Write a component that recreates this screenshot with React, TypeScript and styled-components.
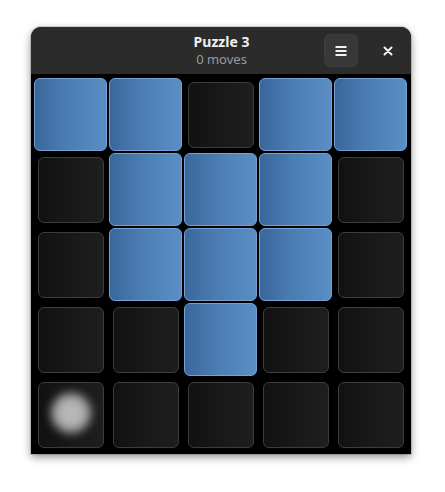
import React, { useState } from "react";
import styled, { createGlobalStyle } from "styled-components";

const GlobalStyle = createGlobalStyle`
  html, body {
    margin: 0;
    padding: 0;
    background: #ffffff;
    font-family: "Noto Sans", "Open Sans", sans-serif;
  }
`;

const Page = styled.div`
  width: 445px;
  height: 492px;
  padding: 27px 0 0 31px;
  box-sizing: border-box;
`;

const Window = styled.div`
  width: 380px;
  border-radius: 10px 10px 0 0;
  overflow: hidden;
  background: #000;
  box-shadow: 0 3px 9px rgba(0, 0, 0, 0.45), 0 0 0 1px rgba(0, 0, 0, 0.12);
`;

const HeaderBar = styled.div`
  height: 47px;
  background: #2b2b2b;
  display: grid;
  grid-template-columns: 1fr auto 1fr;
  align-items: center;
  padding: 0 11px 0 12px;
  box-sizing: border-box;
`;

const TitleBox = styled.div`
  grid-column: 2;
  display: flex;
  flex-direction: column;
  align-items: center;
  line-height: 1;
`;

const Title = styled.div`
  color: #f0f0f0;
  font-weight: 700;
  font-size: 14px;
  margin-bottom: 4px;
`;

const Subtitle = styled.div`
  color: #9a9a9a;
  font-size: 13px;
`;

const Controls = styled.div`
  grid-column: 3;
  justify-self: end;
  display: flex;
  align-items: center;
  gap: 18px;
`;

const MenuButton = styled.button`
  width: 34px;
  height: 33px;
  border: none;
  border-radius: 6px;
  background: #383838;
  box-shadow: inset 0 0 0 1px rgba(255, 255, 255, 0.03);
  display: flex;
  align-items: center;
  justify-content: center;
  padding: 0;
`;

const CloseButton = styled.button`
  width: 24px;
  height: 24px;
  border: none;
  background: transparent;
  display: flex;
  align-items: center;
  justify-content: center;
  padding: 0;
`;

const Board = styled.div`
  display: grid;
  grid-template-columns: repeat(5, 73px);
  grid-auto-rows: 73px;
  gap: 2px;
  padding: 4px 3px 3px 3px;
`;

const Cell = styled.div`
  position: relative;
  display: flex;
  align-items: center;
  justify-content: center;
  overflow: hidden;
`;

const Tile = styled.div<{ $on: boolean }>`
  box-sizing: border-box;
  border-radius: 6px;
  width: ${(p) => (p.$on ? "73px" : "66px")};
  height: ${(p) => (p.$on ? "73px" : "66px")};
  border: 1px solid ${(p) => (p.$on ? "#73a3d6" : "#3d3d3d")};
  background: ${(p) =>
    p.$on
      ? "linear-gradient(90deg, #3a679b 0%, #4b7db3 45%, #5a8ec4 100%)"
      : "linear-gradient(90deg, #111111 0%, #1a1a1a 60%, #1e1e1e 100%)"};
`;

const Touch = styled.div`
  position: absolute;
  left: 50%;
  top: 50%;
  width: 42px;
  height: 42px;
  margin: -23px 0 0 -21px;
  border-radius: 50%;
  background: radial-gradient(circle, #bdbdbd 0%, #b0b0b0 45%, rgba(150,150,150,0.6) 75%, rgba(120,120,120,0) 100%);
  filter: blur(4px);
`;

const layout = [
  "11011",
  "01110",
  "01110",
  "00100",
  "00000",
];

const App = () => {
  const [cells] = useState(layout.map((r) => r.split("").map((c) => c === "1")));

  return (
    <>
      <GlobalStyle />
      <Page>
        <Window>
          <HeaderBar>
            <TitleBox>
              <Title>Puzzle 3</Title>
              <Subtitle>0 moves</Subtitle>
            </TitleBox>
            <Controls>
              <MenuButton aria-label="Menu">
                <svg width="12" height="12" viewBox="0 0 12 12">
                  <rect x="0.5" y="1" width="11" height="2" fill="#f2f2f2" />
                  <rect x="0.5" y="5" width="11" height="2" fill="#f2f2f2" />
                  <rect x="0.5" y="9" width="11" height="2" fill="#f2f2f2" />
                </svg>
              </MenuButton>
              <CloseButton aria-label="Close">
                <svg width="10" height="10" viewBox="0 0 10 10">
                  <path d="M1.5 1.5 L8.5 8.5 M8.5 1.5 L1.5 8.5" stroke="#f2f2f2" strokeWidth="2" strokeLinecap="round" />
                </svg>
              </CloseButton>
            </Controls>
          </HeaderBar>
          <Board>
            {cells.map((row, r) =>
              row.map((on, c) => (
                <Cell key={`${r}-${c}`}>
                  <Tile $on={on} />
                  {r === 4 && c === 0 && <Touch />}
                </Cell>
              ))
            )}
          </Board>
        </Window>
      </Page>
    </>
  );
};

export default App;
